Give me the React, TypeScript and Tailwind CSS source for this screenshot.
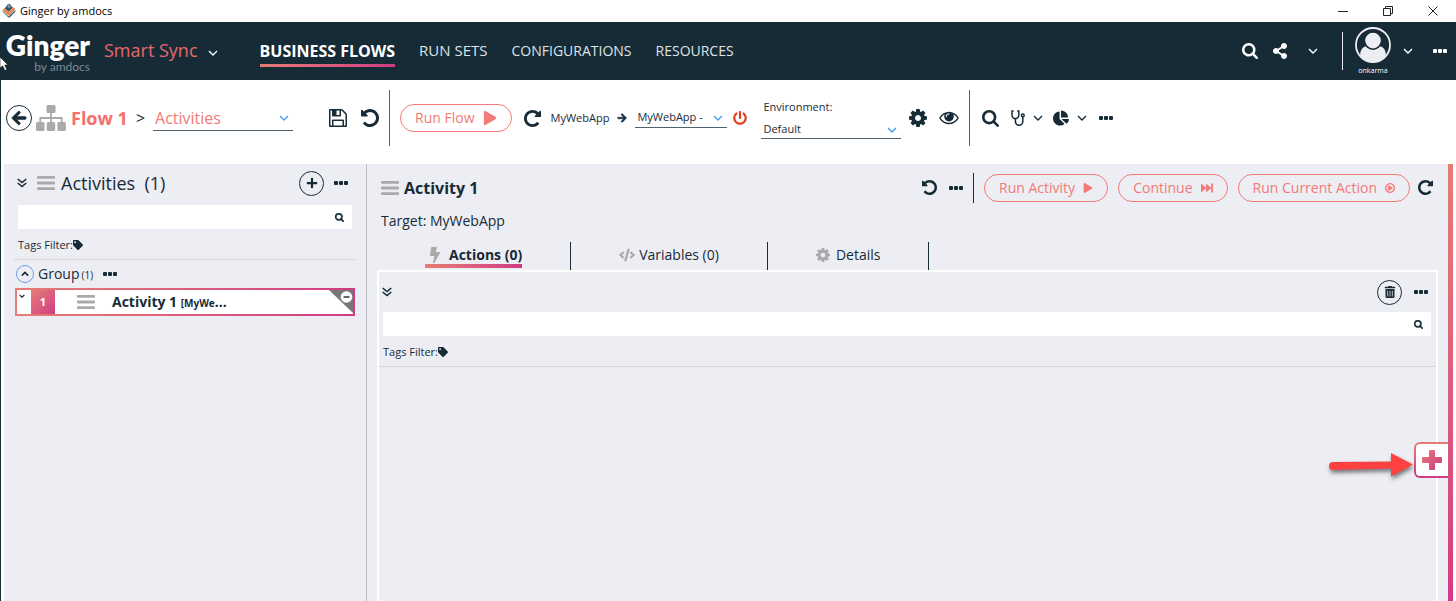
import React from "react";
import {
  FaArrowLeft, FaArrowRight, FaBolt, FaChartPie, FaCode, FaPlay, FaPlus,
  FaPowerOff, FaRegPlayCircle, FaShareAlt, FaTag, FaTrashAlt,
} from "react-icons/fa";

const PATHS = {
  search:
    "M1152 832q0-185-131.5-316.5t-316.5-131.5-316.5 131.5-131.5 316.5 131.5 316.5 316.5 131.5 316.5-131.5 131.5-316.5zm512 832q0 52-38 90t-90 38q-54 0-90-38l-343-342q-179 124-399 124-143 0-273.5-55.5t-225-150-150-225-55.5-273.5 55.5-273.5 150-225 225-150 273.5-55.5 273.5 55.5 225 150 150 225 55.5 273.5q0 220-124 399l343 343q37 37 37 90z",
  undo:
    "M1664 896q0 156-61 298t-164 245-245 164-298 61q-172 0-327-72.5t-264-204.5q-7-10-6.5-22.5t8.5-20.5l137-138q10-9 25-9 16 2 23 12 73 95 179 147t225 52q104 0 198.5-40.5t163.5-109.5 109.5-163.5 40.5-198.5-40.5-198.5-109.5-163.5-163.5-109.5-198.5-40.5q-98 0-188 35.5t-160 101.5l137 138q31 30 14 69-17 40-59 40h-448q-26 0-45-19t-19-45v-448q0-42 40-59 39-17 69 14l130 129q107-101 244.5-156.5t284.5-55.5q156 0 298 61t245 164 164 245 61 298z",
  save:
    "M512 1536h768v-384h-768v384zm896 0h128v-896q0-14-10-38.5t-20-34.5l-281-281q-10-10-34-20t-39-10v416q0 40-28 68t-68 28h-576q-40 0-68-28t-28-68v-416h-128v1280h128v-416q0-40 28-68t68-28h832q40 0 68 28t28 68v416zm-384-928v-320q0-13-9.5-22.5t-22.5-9.5h-192q-13 0-22.5 9.5t-9.5 22.5v320q0 13 9.5 22.5t22.5 9.5h192q13 0 22.5-9.5t9.5-22.5zm640 32v928q0 40-28 68t-68 28h-1344q-40 0-68-28t-28-68v-1344q0-40 28-68t68-28h928q40 0 88 20t76 48l280 280q28 28 48 76t20 88z",
  eye:
    "M1664 960q-152-236-381-353 61 104 61 225 0 185-131.5 316.5t-316.5 131.5-316.5-131.5-131.5-316.5q0-121 61-225-229 117-381 353 133 205 333.5 326.5t434.5 121.5 434.5-121.5 333.5-326.5zm-720-384q0-20-14-34t-34-14q-125 0-214.5 89.5t-89.5 214.5q0 20 14 34t34 14 34-14 14-34q0-86 61-147t147-61q20 0 34-14t14-34zm848 384q0 34-20 69-140 230-376.5 368.5t-499.5 138.5-499.5-139-376.5-368q-20-35-20-69t20-69q140-229 376.5-368t499.5-139 499.5 139 376.5 368q20 35 20 69z",
  cog:
    "M1152 896q0-106-75-181t-181-75-181 75-75 181 75 181 181 75 181-75 75-181zm512-109v222q0 12-8 23t-20 13l-185 28q-19 54-39 91 35 50 107 138 10 12 10 25t-9 23q-27 37-99 108t-94 71q-12 0-26-9l-138-108q-44 23-91 38-16 136-29 186-7 28-36 28h-222q-14 0-24.5-8.5t-11.5-21.5l-28-184q-49-16-90-37l-141 107q-10 9-25 9-14 0-25-11-126-114-165-168-7-10-7-23 0-12 8-23 15-21 51-66.5t54-70.5q-27-50-41-99l-183-27q-13-2-21-12.5t-8-23.5v-222q0-12 8-23t19-13l186-28q14-46 39-92-40-57-107-138-10-12-10-24 0-10 9-23 26-36 98.5-107.5t94.5-71.5q13 0 26 10l138 107q44-23 91-38 16-136 29-186 7-28 36-28h222q14 0 24.5 8.5t11.5 21.5l28 184q49 16 90 37l142-107q9-9 24-9 13 0 25 10 129 119 165 170 7 8 7 22 0 12-8 23-15 21-51 66.5t-54 70.5q26 50 41 98l183 28q13 2 21 12.5t8 23.5z",
};

type Cls = { className?: string };

function Glyph({ name, className = "" }: { name: keyof typeof PATHS } & Cls) {
  const box = name === "eye" ? "0 128 1792 1664" : name === "search" ? "0 128 1664 1664" : "128 128 1536 1536";
  return (
    <svg viewBox={box} fill="currentColor" className={`shrink-0 ${className}`} aria-hidden="true">
      <path d={PATHS[name]} />
    </svg>
  );
}

function Redo({ className = "" }: Cls) {
  return <Glyph name="undo" className={`-scale-x-100 ${className}`} />;
}

function Dots({ className = "" }: Cls) {
  return (
    <svg viewBox="0 0 14 4" fill="currentColor" className={`h-1 w-3.5 shrink-0 ${className}`} aria-hidden="true">
      <rect x="0" y="0" width="4" height="4" rx="1" />
      <rect x="5" y="0" width="4" height="4" rx="1" />
      <rect x="10" y="0" width="4" height="4" rx="1" />
    </svg>
  );
}

function Chevron({ className = "", size = "h-1.5 w-2.5" }: Cls & { size?: string }) {
  return (
    <svg viewBox="0 0 10 6" fill="none" stroke="currentColor" strokeWidth="1.4" className={`shrink-0 ${size} ${className}`} aria-hidden="true">
      <path d="M1 1l4 4 4-4" />
    </svg>
  );
}

function DoubleChevron() {
  return (
    <svg viewBox="0 0 10 10" fill="none" stroke="currentColor" strokeWidth="1.5" className="size-2.5" aria-hidden="true">
      <path d="M.7 1L5 4.6 9.3 1M.7 5L5 8.6 9.3 5" />
    </svg>
  );
}

function Bars({ className = "" }: Cls) {
  return (
    <svg viewBox="0 0 18 14" fill="#aaaaaa" className={`h-3.5 w-[18px] shrink-0 ${className}`} aria-hidden="true">
      <rect width="18" height="2.8" rx=".8" />
      <rect y="5.6" width="18" height="2.8" rx=".8" />
      <rect y="11.2" width="18" height="2.8" rx=".8" />
    </svg>
  );
}

function Sitemap() {
  return (
    <svg viewBox="0 0 30 26" className="h-[26px] w-[30px] shrink-0" fill="#aaaaaa" aria-hidden="true">
      <rect x="10.5" y="0" width="9" height="8" rx="1.5" />
      <rect x="0" y="17" width="8.5" height="9" rx="1.5" />
      <rect x="10.7" y="17" width="8.5" height="9" rx="1.5" />
      <rect x="21.4" y="17" width="8.5" height="9" rx="1.5" />
      <path d="M15 7v11M4.3 18v-5h21.4v5" fill="none" stroke="#aaaaaa" strokeWidth="1.8" />
    </svg>
  );
}

function Stethoscope() {
  return (
    <svg viewBox="0 0 14 16" className="h-4 w-3.5 shrink-0" fill="none" stroke="currentColor" strokeWidth="1.5" aria-hidden="true">
      <path d="M2.6 1H1v4.2a3.4 3.4 0 0 0 6.8 0V1H6.2M4.4 8.6v3a3.6 3.6 0 0 0 7.4 0V7" />
      <circle cx="11.8" cy="5.4" r="1.4" />
    </svg>
  );
}

function AppIcon() {
  return (
    <svg viewBox="0 0 16 16" className="size-4" aria-hidden="true">
      <rect x="3" y="3" width="10" height="10" rx="1.5" transform="rotate(45 8 8)" fill="#2f5068" />
      <circle cx="8" cy="3.4" r="2" fill="#7f9bab" stroke="#2f5068" strokeWidth=".8" />
      <path d="M2.5 6.500L7.500 11l6-5.500" fill="none" stroke="#dfe6ea" strokeWidth="3.6" />
      <path d="M2.500 6.200L7.500 10.700l6-5.500" fill="none" stroke="#e8894a" strokeWidth="2.6" />
    </svg>
  );
}

function Avatar() {
  return (
    <svg viewBox="0 0 36 36" className="size-9" aria-hidden="true">
      <defs>
        <clipPath id="head-clip"><circle cx="18" cy="18" r="17" /></clipPath>
      </defs>
      <g clipPath="url(#head-clip)" fill="#edeef4">
        <path d="M5 36V29q0-9 7-10h12q7 1 7 10v7z" />
        <circle cx="18" cy="14" r="9" fill="#172b37" />
        <circle cx="18" cy="13.6" r="7.8" />
      </g>
      <circle cx="18" cy="18" r="17" fill="none" stroke="#edeef4" strokeWidth="1.8" />
    </svg>
  );
}

function Pill({ children }: { children: React.ReactNode }) {
  return (
    <button className="flex h-7 items-center gap-2 rounded-full border border-[#f37a76] px-3.5 text-sm text-[#f37a76]">
      {children}
    </button>
  );
}

function Picker({ label, value, className, hideLabel = true }: { label: string; value: string; className: string; hideLabel?: boolean }) {
  return (
    <label className="block shrink-0">
      {!hideLabel && <span className="block pl-0.5 text-[11px] leading-4">{label}</span>}
      <span className={`flex items-center border-b border-[#50626f] ${className}`}>
        <select
          aria-label={hideLabel ? label : undefined}
          className="h-full min-w-0 flex-1 appearance-none bg-transparent outline-none"
          defaultValue={value}
        >
          <option>{value}</option>
        </select>
        <Chevron className="pointer-events-none text-[#3fa0f5]" />
      </span>
    </label>
  );
}

function SearchBox({ label }: { label: string }) {
  return (
    <div className="flex h-6 items-center bg-white pr-2">
      <input type="text" aria-label={label} className="h-full min-w-0 flex-1 px-2 text-xs outline-none" />
      <button aria-label="Search"><Glyph name="search" className="size-[9px] stroke-current stroke-[80]" /></button>
    </div>
  );
}

function TagsFilter() {
  return (
    <button className="flex items-center text-[11px] leading-4">
      Tags Filter:<FaTag className="size-2.5" />
    </button>
  );
}

function TitleBar() {
  return (
    <div className="flex h-[22px] items-center bg-white pr-px text-[11px] text-black">
      <span className="pl-px"><AppIcon /></span>
      <span className="pl-[3px]">Ginger by amdocs</span>
      <div className="ml-auto flex">
        <button aria-label="Minimize" className="flex h-5 w-[45px] items-center justify-center">
          <svg viewBox="0 0 10 10" className="size-2.5" stroke="#222" aria-hidden="true"><path d="M0 5.5h10" /></svg>
        </button>
        <button aria-label="Restore" className="flex h-5 w-[45px] items-center justify-center">
          <svg viewBox="0 0 10 10" className="size-2.5" fill="none" stroke="#222" aria-hidden="true"><path d="M.5 2.5h7v7h-7zM2.5 2.5v-2h7v7h-2" /></svg>
        </button>
        <button aria-label="Close" className="flex h-5 w-[45px] items-center justify-center">
          <svg viewBox="0 0 10 10" className="size-2.5" stroke="#222" aria-hidden="true"><path d="M.5.5l9 9M9.5.5l-9 9" /></svg>
        </button>
      </div>
    </div>
  );
}

function Header() {
  return (
    <header className="flex h-[58px] items-center bg-[#172b37] text-white">
      <div className="w-[90px] text-right font-[Lato,sans-serif]">
        <div className="text-[28px] leading-8 font-extrabold">Ginger</div>
        <div className="text-xs leading-3 text-[#7d8a94]">by amdocs</div>
      </div>
      <button className="flex items-center gap-2.5 pb-0.5 pl-3.5 text-lg text-[#e8686a]">
        Smart Sync
        <Chevron className="mt-1.5 text-white" />
      </button>
      <nav className="flex items-center gap-6 pl-[42px] text-sm text-[#dfe3e6]">
        <a href="#flows" className="relative text-base leading-5 font-bold text-white">
          BUSINESS FLOWS
          <span className="absolute inset-x-0 -bottom-1.5 h-[3px] bg-linear-to-r from-[#e67c73] to-[#d13a84]" />
        </a>
        <a href="#sets" className="text-[15px]">RUN SETS</a>
        <a href="#configurations">CONFIGURATIONS</a>
        <a href="#resources">RESOURCES</a>
      </nav>
      <div className="ml-auto flex h-full items-center pr-[9px]">
        <button aria-label="Search"><Glyph name="search" className="size-4" /></button>
        <button aria-label="Share" className="ml-3.5"><FaShareAlt className="size-4" /></button>
        <button aria-label="More sharing" className="ml-5"><Chevron /></button>
        <span className="mr-3 ml-6 h-[38px] w-px bg-[#edeef4]" />
        <button className="flex flex-col items-center">
          <Avatar />
          <span className="h-3 text-[7px] leading-4">onkarma</span>
        </button>
        <button aria-label="User menu" className="ml-3"><Chevron /></button>
        <button aria-label="More" className="ml-5"><Dots /></button>
      </div>
    </header>
  );
}

function Toolbar() {
  return (
    <div className="flex h-[84px] items-center bg-white pb-2 pl-[5px]">
      <button aria-label="Back" className="flex size-[26px] items-center justify-center rounded-full border border-[#172b37]">
        <FaArrowLeft className="size-4 stroke-current stroke-[30]" />
      </button>
      <span className="pl-1"><Sitemap /></span>
      <h1 className="pl-[5px] text-lg font-bold text-[#f4706d]">Flow 1</h1>
      <span className="px-2 text-base">&gt;</span>
      <Picker label="Page" value="Activities" className="h-[26px] w-[140px] pr-1 pl-0.5 text-base text-[#f37a76]" />
      <button aria-label="Save" className="ml-9"><Glyph name="save" className="size-[18px]" /></button>
      <button aria-label="Undo" className="ml-3.5"><Glyph name="undo" className="size-[18px]" /></button>
      <span className="mx-2.5 h-14 w-px bg-[#50626f]" />
      <Pill>Run Flow <FaPlay className="size-3.5" /></Pill>
      <button aria-label="Reset" className="ml-3"><Redo className="size-[17px]" /></button>
      <span className="pl-2.5 text-[11px]">MyWebApp</span>
      <FaArrowRight className="mx-2 size-2.5 stroke-current stroke-[30]" />
      <Picker label="Application" value="MyWebApp -" className="h-5 w-[92px] pr-1 pl-0.5 text-[11px]" />
      <button aria-label="Disconnect" className="ml-1.5 text-[#e2401c]"><FaPowerOff className="size-3.5" /></button>
      <div className="mx-3.5 pt-0.5">
        <Picker label="Environment:" value="Default" hideLabel={false} className="mt-1.5 h-[18px] w-[140px] pr-1 pl-0.5 text-[11px]" />
      </div>
      <button aria-label="Settings" className="-ml-1.5"><Glyph name="cog" className="size-[18px]" /></button>
      <button aria-label="View" className="ml-3"><Glyph name="eye" className="h-[18px] w-5" /></button>
      <span className="mr-3 ml-2.5 h-14 w-px bg-[#50626f]" />
      <button aria-label="Search"><Glyph name="search" className="size-[17px]" /></button>
      <button aria-label="Analyze" className="ml-3 flex items-center gap-2"><Stethoscope /><Chevron /></button>
      <button aria-label="Reports" className="ml-2.5 flex items-center gap-2"><FaChartPie className="size-4" /><Chevron /></button>
      <button aria-label="More" className="ml-3"><Dots /></button>
    </div>
  );
}

function ActivitiesPanel() {
  return (
    <aside className="w-[363px] shrink-0 border-r border-[#bfc0c3] bg-[#edeef4] pt-1.5 pr-[11px] pl-2.5">
      <div className="flex h-[26px] items-center pr-[7px] pl-[3px]">
        <button aria-label="Collapse all"><DoubleChevron /></button>
        <Bars className="ml-2.5" />
        <h2 className="pl-1.5 text-lg whitespace-pre">Activities  (1)</h2>
        <button aria-label="Add activity" className="mr-2.5 ml-auto flex size-[25px] items-center justify-center rounded-full border border-[#172b37]">
          <FaPlus className="size-3" />
        </button>
        <button aria-label="More"><Dots /></button>
      </div>
      <div className="pt-[9px] pr-[3px] pl-1"><SearchBox label="Search activities" /></div>
      <div className="border-b border-[#d4d5d9] px-1 pt-2 pb-1.5"><TagsFilter /></div>
      <div className="flex h-7 items-center pl-0.5">
        <button aria-label="Collapse group" className="flex size-[18px] items-center justify-center rounded-full border border-[#6c9ff0]">
          <Chevron size="h-1.5 w-2" className="-scale-y-100 stroke-2" />
        </button>
        <span className="pl-1 text-sm">Group</span>
        <span className="pt-0.5 pl-0.5 text-[10px]">(1)</span>
        <button aria-label="Group options" className="ml-2.5"><Dots /></button>
      </div>
      <div className="ml-px bg-linear-to-r from-[#e67c73] to-[#d13a84] p-0.5">
        <div className="relative flex h-6 items-center bg-white">
          <button aria-label="Expand activity" className="flex w-3.5 self-start pt-1 pl-0.5"><Chevron size="h-1 w-1.5" className="stroke-2" /></button>
          <span className="flex h-6 w-6 items-center justify-center bg-linear-to-br from-[#e67c73] to-[#d13a84] text-[11px] font-bold text-white">1</span>
          <Bars className="ml-[22px]" />
          <span className="pl-[17px] text-sm font-bold">Activity 1 <span className="text-[10px]">[MyWe</span>...</span>
          <svg viewBox="0 0 24 24" className="absolute top-0 right-0 size-6" aria-hidden="true">
            <path d="M0 0h24v23z" fill="#777" />
            <circle cx="17.5" cy="7" r="5.8" fill="#fff" />
            <path d="M14.500 7h6" stroke="#666" strokeWidth="2" />
          </svg>
        </div>
      </div>
    </aside>
  );
}

function Tabs() {
  return (
    <div role="tablist" className="flex pt-[11px] text-sm leading-5">
      <button role="tab" aria-selected="true" className="flex h-7 border-r border-[#172b37] px-12">
        <span className="relative flex items-center pb-0.5 pl-1 font-bold">
          <FaBolt className="mr-2 h-4 w-3 text-[#aaaaaa]" />Actions (0)
          <span className="absolute inset-x-0 bottom-0.5 h-1 bg-linear-to-r from-[#e67c73] to-[#d13a84]" />
        </span>
      </button>
      <button role="tab" aria-selected="false" className="flex h-7 items-center border-r border-[#172b37] px-12 pb-0.5">
        <FaCode className="mr-1 size-4 text-[#aaaaaa]" />Variables (0)
      </button>
      <button role="tab" aria-selected="false" className="flex h-7 items-center border-r border-[#172b37] px-12 pb-0.5">
        <Glyph name="cog" className="mr-1.5 size-3.5 text-[#aaaaaa]" />Details
      </button>
    </div>
  );
}

function ActivityPanel() {
  return (
    <main className="flex min-w-0 flex-1 flex-col bg-[#edeef4] pr-2.5 pl-2.5">
      <div className="flex h-[47px] items-center pl-1">
        <Bars />
        <h2 className="pl-[5px] text-base font-bold">Activity 1</h2>
        <div className="ml-auto flex items-center pr-[5px]">
          <button aria-label="Undo"><Glyph name="undo" className="size-[15px]" /></button>
          <button aria-label="More" className="ml-3"><Dots /></button>
          <span className="mx-2.5 h-[30px] w-px bg-[#172b37]" />
          <div className="flex gap-2.5">
            <Pill>Run Activity <FaPlay className="size-2.5" /></Pill>
            <Pill>
              Continue
              <svg viewBox="0 0 13 10" className="h-2.5 w-3" fill="currentColor" aria-hidden="true"><path d="M0 0l5.500 4.600V0L11 4.600V0h2v10h-2V5.400L5.500 10V5.400L0 10z" /></svg>
            </Pill>
            <Pill>Run Current Action <FaRegPlayCircle className="size-2.5 stroke-current stroke-[24]" /></Pill>
          </div>
          <button aria-label="Reset" className="ml-2"><Redo className="size-[15px]" /></button>
        </div>
      </div>
      <p className="pl-1 text-sm leading-5">Target: MyWebApp</p>
      <Tabs />
      <section className="flex flex-1 flex-col border-2 border-b-0 border-white">
        <div className="flex h-10 items-center pr-2 pl-[3px]">
          <button aria-label="Collapse all"><DoubleChevron /></button>
          <button aria-label="Delete all" className="mr-3 ml-auto flex size-[25px] items-center justify-center rounded-full border border-[#172b37]">
            <FaTrashAlt className="size-3" />
          </button>
          <button aria-label="More"><Dots /></button>
        </div>
        <div className="pr-[5px] pl-1"><SearchBox label="Search actions" /></div>
        <div className="border-b border-[#d4d5d9] px-1 pt-2 pb-1.5"><TagsFilter /></div>
      </section>
    </main>
  );
}

export default function App() {
  return (
    <div className="relative flex min-h-screen flex-col overflow-hidden bg-white font-['Open_Sans','Noto_Sans',sans-serif] text-[#172b37]">
      <TitleBar />
      <Header />
      <div className="flex flex-1 flex-col border-l border-[#172b37]">
        <Toolbar />
        <div className="flex flex-1 pr-[3px] pl-[3px]">
          <ActivitiesPanel />
          <ActivityPanel />
          <div className="relative w-[5px] shrink-0 bg-linear-to-b from-[#e67c73] to-[#d13a84]">
            <button aria-label="Add action" className="absolute top-[278px] right-[5px] h-9 w-[34px] rounded-l-md bg-linear-to-b from-[#e67c73] to-[#d13a84] py-0.5 pl-0.5">
              <span className="flex h-full items-center justify-center rounded-l bg-white">
                <svg viewBox="0 0 20 20" className="size-5" aria-hidden="true">
                  <defs>
                    <linearGradient id="plus-fill" x1="0" y1="0" x2="1" y2="1">
                      <stop offset="0" stopColor="#e67c73" /><stop offset="1" stopColor="#d13a84" />
                    </linearGradient>
                  </defs>
                  <path d="M8 0h4q1 0 1 1v6h6q1 0 1 1v4q0 1-1 1h-6v6q0 1-1 1H8q-1 0-1-1v-6H1q-1 0-1-1V8q0-1 1-1h6V1q0-1 1-1z" fill="url(#plus-fill)" />
                </svg>
              </span>
            </button>
            <svg viewBox="0 0 90 32" className="pointer-events-none absolute top-[286px] right-[38px] h-8 w-[90px] drop-shadow-[1px_3px_2px_rgba(0,0,0,0.5)]" fill="#fd4141" aria-hidden="true">
              <path d="M8 12L66 11.500V3l22 11.500-22 12v-8L8 20a4 4 0 0 1 0-8z" />
            </svg>
          </div>
        </div>
      </div>
      <svg viewBox="0 0 10 16" className="pointer-events-none absolute top-14 left-0 h-4 w-2.5" fill="#fff" stroke="#111" strokeWidth=".6" aria-hidden="true">
        <path d="M0 1l8 8H4.800l2 4.500-2 .9-2-4.500L0 12z" />
      </svg>
    </div>
  );
}
